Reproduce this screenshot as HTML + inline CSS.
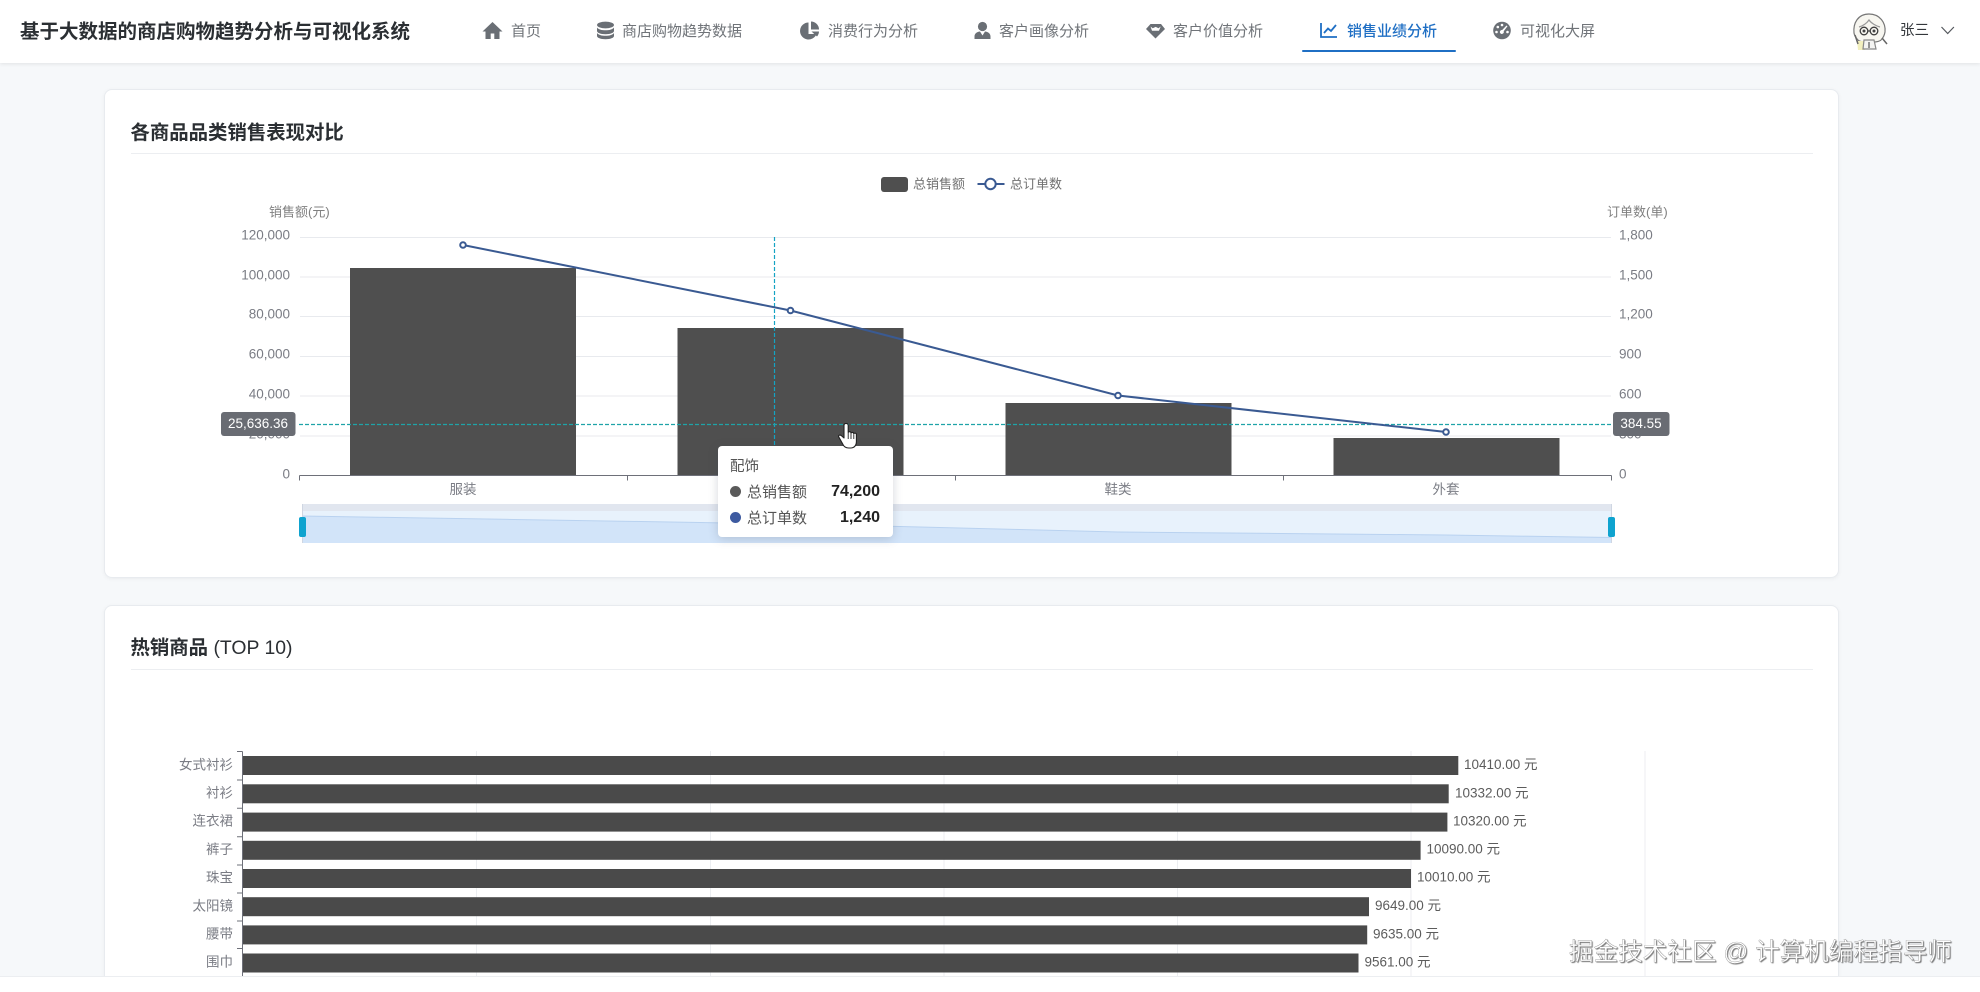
<!DOCTYPE html>
<html lang="zh-CN">
<head>
<meta charset="utf-8">
<title>基于大数据的商店购物趋势分析与可视化系统</title>
<style>
html,body{margin:0;padding:0;width:1980px;height:992px;overflow:hidden;background:#f6f8fa;font-family:"Liberation Sans","Noto Sans CJK SC",sans-serif}
#wrap{position:absolute;left:0;top:0;width:1980px;height:992px;overflow:hidden;filter:blur(.35px)}
#header{position:absolute;left:0;top:0;width:1980px;height:63px;background:#fff;box-shadow:0 1px 4px rgba(0,0,0,.09);z-index:3}
.brand{position:absolute;left:20px;top:18px;font-size:19.5px;line-height:28px;font-weight:700;color:#2b2f33;white-space:nowrap}
.nav{position:absolute;top:21px;font-size:15px;line-height:22px;color:#707479;white-space:nowrap}
.nav.on{color:#1f6fc4;font-weight:500}
.ico{position:absolute;top:0;left:0;width:1980px;height:63px;pointer-events:none}
.under{position:absolute;left:1302px;top:50px;width:154px;height:2px;background:#1f6fc4;border-radius:1px}
.name{position:absolute;left:1900px;top:20px;font-size:14.5px;line-height:22px;color:#33373b}
.card{position:absolute;left:104px;width:1735px;background:#fff;border:1px solid #e8ebef;border-radius:8px;box-sizing:border-box;box-shadow:0 1px 4px rgba(0,0,0,.05)}
#c1{top:89px;height:489px}
#c2{top:605px;height:385px}
.ct{position:absolute;left:130.500px;font-size:19.4px;line-height:28px;font-weight:700;color:#2b2f33;white-space:nowrap;z-index:1}
.ct span{font-weight:400}
.dv{position:absolute;left:131px;width:1682px;height:1px;background:#eceef1;z-index:1}
#chart{position:absolute;left:0;top:0;width:1980px;height:992px;z-index:1}
#chart text{font-family:"Liberation Sans","Noto Sans CJK SC",sans-serif}
#tip{position:absolute;left:718px;top:446px;width:175px;height:91px;background:#fff;border-radius:4px;box-shadow:0 2px 10px rgba(60,70,90,.22);z-index:2;color:#555}
#tip div{position:absolute;white-space:nowrap}
.dot{width:11px;height:11px;border-radius:50%}
.val{right:13px;font-size:16px;font-weight:700;color:#222;line-height:22px}
.lab{left:29px;font-size:15px;line-height:22px;color:#555}
#cur{position:absolute;left:0;top:0;width:1980px;height:992px;z-index:4;pointer-events:none}
#foot{position:absolute;left:0;top:976px;width:1980px;height:16px;background:#fff;border-top:1px solid #eceef1;box-sizing:border-box;z-index:3}
#wm{position:absolute;left:1569px;top:937px;font-size:24.6px;line-height:32px;color:#fff;-webkit-text-stroke:.35px #8a8a8a;text-shadow:1px 1px 1px rgba(0,0,0,.55);white-space:nowrap;z-index:5}
</style>
</head>
<body>
<div id="wrap">
<div id="header">
  <div class="brand">基于大数据的商店购物趋势分析与可视化系统</div>
  <svg class="ico" viewBox="0 0 1980 63">
    <!-- home -->
    <path fill="#6a6f75" d="M492.500 22 482.500 31.500h3V39h5.200v-5.500h3.600V39h5.200v-7.500h3z"/>
    <!-- database -->
    <g fill="#6a6f75">
      <ellipse cx="605.500" cy="25" rx="8.500" ry="3.400"/>
      <path d="M597 27.500c1.500 2 4.800 2.800 8.500 2.800s7-.8 8.500-2.800V31c0 1.900-3.800 3.200-8.500 3.200S597 32.900 597 31z"/>
      <path d="M597 33c1.500 2 4.800 2.800 8.500 2.800s7-.8 8.500-2.800v3c0 1.900-3.800 3.200-8.500 3.200S597 37.900 597 36z"/>
    </g>
    <!-- pie -->
    <g fill="#6a6f75">
      <path d="M808.500 22.500a8.500 8.500 0 1 0 8 11.500h-8z"/>
      <path d="M811 21.500a8 8 0 0 1 8 8h-8z"/>
      <path d="M811.500 31.500h7.500a8 8 0 0 1-2 5z"/>
    </g>
    <!-- user -->
    <g fill="#6a6f75">
      <circle cx="982.500" cy="26.500" r="4.600"/>
      <path d="M974.500 39v-2.500c0-3 2.500-4.800 5.500-5l2.500 4 2.500-4c3 .2 5.500 2 5.500 5V39z"/>
    </g>
    <!-- gem -->
    <path fill="#6a6f75" d="M1150.500 24h10.500l4 5-9.500 9.500-9.500-9.500z"/>
    <path fill="#fff" d="M1150.500 26.500l2.200 1.700 3-1.300 2.800 1.300 2.200-1.700-1.700 4.200h-7z"/>
    <!-- chart line -->
    <g fill="none" stroke="#1f6fc4" stroke-width="1.800">
      <path d="M1321 23v14h16"/>
      <path d="M1324 33l4-4.500 3 2.500 5-6"/>
    </g>
    <!-- dial -->
    <circle cx="1502" cy="30.500" r="8.800" fill="#6a6f75"/>
    <g fill="#fff">
      <circle cx="1496.500" cy="32" r="1.300"/>
      <circle cx="1497.800" cy="27" r="1.300"/>
      <circle cx="1502" cy="25" r="1.300"/>
      <circle cx="1507.500" cy="32" r="1.300"/>
      <path d="M1506.500 25.500l1 .7-3.800 5a2 2 0 1 1-1.500-1.200z"/>
    </g>
    <!-- avatar -->
    <g fill="none" stroke="#777" stroke-width="1.200">
      <path fill="#f7f6f0" d="M1854 33c-1-10 4-19 15-19s17 9 16 18c-.5 3-2 6-4 8-3 3-20 3-23 0-2-2-3.500-4-4-7z"/>
      <path fill="#f2efbe" stroke="none" d="M1857 41h10l-2 9h-7z"/>
      <path fill="#f4f4f2" stroke="#888" d="M1864 40h10l2 9h-13z"/>
      <path d="M1859 27c4-1 8-4 10-7 2 3 7 6 11 7" stroke="#999"/>
      <circle cx="1864" cy="31" r="3.800" stroke="#3c3c3c" stroke-width="1.300"/>
      <circle cx="1874" cy="31" r="3.800" stroke="#3c3c3c" stroke-width="1.300"/>
      <path d="M1867.800 31h2.400" stroke="#3c3c3c"/>
      <path d="M1855 35l3 9M1882 38l5 6" stroke="#666" stroke-width="1.500"/>
      <path d="M1869 42v6" stroke="#555"/>
    </g>
    <circle cx="1864" cy="31" r="1.500" fill="#444"/>
    <circle cx="1874" cy="31" r="1.500" fill="#444"/>
    <!-- chevron -->
    <path d="M1941.500 27l6.200 6.500 6.200-6.500" fill="none" stroke="#55595e" stroke-width="1.200"/>
  </svg>
  <div class="nav" style="left:511px">首页</div>
  <div class="nav" style="left:622px">商店购物趋势数据</div>
  <div class="nav" style="left:828px">消费行为分析</div>
  <div class="nav" style="left:999px">客户画像分析</div>
  <div class="nav" style="left:1173px">客户价值分析</div>
  <div class="nav on" style="left:1347px">销售业绩分析</div>
  <div class="nav" style="left:1520px">可视化大屏</div>
  <div class="under"></div>
  <div class="name">张三</div>
</div>

<div class="card" id="c1"></div>
<div class="card" id="c2"></div>
<div class="ct" style="top:118.500px">各商品品类销售表现对比</div>
<div class="dv" style="top:153px"></div>
<div class="ct" style="top:634px">热销商品 <span>(TOP 10)</span></div>
<div class="dv" style="top:669px"></div>

<svg id="chart" viewBox="0 0 1980 992">
  <!-- legend -->
  <rect x="881" y="177" width="27" height="15" rx="3" fill="#4f4f4f"/>
  <text x="913" y="184" font-size="13" fill="#707070" dominant-baseline="central">总销售额</text>
  <path d="M977.500 184h27" stroke="#3a5a92" stroke-width="2"/>
  <circle cx="990.500" cy="184" r="5.200" fill="#fff" stroke="#3a5a92" stroke-width="2"/>
  <text x="1010" y="184" font-size="13" fill="#707070" dominant-baseline="central">总订单数</text>

  <!-- axis names -->
  <text x="269" y="212" font-size="13" fill="#808080" dominant-baseline="central">销售额(元)</text>
  <text x="1607" y="212" font-size="13" fill="#808080" dominant-baseline="central">订单数(单)</text>

  <!-- grid -->
  <g stroke="#e8eaee" stroke-width="1">
    <path d="M300 237.500H1611M300 277H1611M300 316.500H1611M300 356.500H1611M300 396H1611M300 436H1611"/>
  </g>

  <!-- y labels -->
  <g font-size="13.500" fill="#7a7c84" text-anchor="end" dominant-baseline="central">
    <text x="290" y="235">120,000</text>
    <text x="290" y="275">100,000</text>
    <text x="290" y="314">80,000</text>
    <text x="290" y="354">60,000</text>
    <text x="290" y="394">40,000</text>
    <text x="290" y="434">20,000</text>
    <text x="290" y="474">0</text>
  </g>
  <g font-size="13.500" fill="#7a7c84" dominant-baseline="central">
    <text x="1619" y="235">1,800</text>
    <text x="1619" y="275">1,500</text>
    <text x="1619" y="314">1,200</text>
    <text x="1619" y="354">900</text>
    <text x="1619" y="394">600</text>
    <text x="1619" y="434">300</text>
    <text x="1619" y="474">0</text>
  </g>

  <!-- bars -->
  <g fill="#4f4f4f">
    <rect x="350" y="268" width="226" height="207.500"/>
    <rect x="677.500" y="328" width="226" height="147.500"/>
    <rect x="1005.500" y="403" width="226" height="72.500"/>
    <rect x="1333.500" y="438" width="226" height="37.500"/>
  </g>

  <!-- x axis -->
  <path d="M299.500 475.500H1611.500M299.500 475.500v5M627.500 475.500v5M955.500 475.500v5M1283.500 475.500v5M1611.500 475.500v5" stroke="#6e7079" fill="none"/>
  <g font-size="13.500" fill="#7a7c84" text-anchor="middle" dominant-baseline="central">
    <text x="463" y="489.500">服装</text>
    <text x="791" y="489.500">配饰</text>
    <text x="1118" y="489.500">鞋类</text>
    <text x="1446" y="489.500">外套</text>
  </g>

  <!-- crosshair -->
  <path d="M774.500 237V475" stroke="#14a3c4" stroke-width="1.200" stroke-dasharray="4 2" fill="none"/>
  <path d="M299 424.500H1612" stroke="#1fa3a8" stroke-width="1.200" stroke-dasharray="4 2" fill="none"/>

  <!-- line -->
  <polyline points="463,245 790.500,310.500 1118,395.500 1446,432" fill="none" stroke="#3a5a92" stroke-width="2"/>
  <g fill="#fff" stroke="#3a5a92" stroke-width="2">
    <circle cx="463" cy="245" r="2.800"/>
    <circle cx="790.500" cy="310.500" r="2.800"/>
    <circle cx="1118" cy="395.500" r="2.800"/>
    <circle cx="1446" cy="432" r="2.800"/>
  </g>

  <!-- axis pointer labels -->
  <rect x="221" y="412" width="74.500" height="24" rx="3" fill="#696c73"/>
  <text x="258" y="423.500" font-size="13.500" fill="#fff" text-anchor="middle" dominant-baseline="central">25,636.36</text>
  <rect x="1613" y="412" width="56.500" height="24" rx="3" fill="#696c73"/>
  <text x="1641" y="423.500" font-size="13.500" fill="#fff" text-anchor="middle" dominant-baseline="central">384.55</text>

  <!-- data zoom -->
  <rect x="302" y="504" width="1310" height="7" fill="#e1e6ef"/>
  <rect x="302" y="511" width="1310" height="32" fill="#e8f2fc"/>
  <polygon points="302,516 700,522.500 900,526.500 1118,532 1446,535 1611,537.500 1611,543 302,543" fill="#d2e4f9"/>
  <polyline points="302,516 700,522.500 900,526.500 1118,532 1446,535 1611,537.500" fill="none" stroke="#b9d2f0" stroke-width="1"/>
  <path d="M302.500 504V543M1611.500 504V543" stroke="#cfd6e2" stroke-width="1"/>
  <rect x="299" y="517" width="7" height="20" rx="2" fill="#0fa3cf"/>
  <rect x="1608" y="517" width="7" height="20" rx="2" fill="#0fa3cf"/>

  <!-- chart 2 grid -->
  <path d="M476.500 751V976M710.500 751V976M944 751V976M1177.500 751V976M1411 751V976M1645 751V976" stroke="#eceef1" stroke-width="1" fill="none"/>
  <!-- chart 2 bars -->
  <g fill="#4a4a4a">
    <rect x="242" y="756" width="1216.300" height="19"/>
    <rect x="242" y="784.300" width="1206.700" height="19"/>
    <rect x="242" y="812.600" width="1205.400" height="19"/>
    <rect x="242" y="840.800" width="1178.600" height="19"/>
    <rect x="242" y="869" width="1169" height="19"/>
    <rect x="242" y="897.200" width="1127" height="19"/>
    <rect x="242" y="925.400" width="1125.200" height="19"/>
    <rect x="242" y="953.500" width="1116.500" height="19"/>
  </g>
  <!-- chart 2 axis -->
  <path d="M242.500 751.500V976M237 751.500h5.500M237 780h5.500M237 808.300h5.500M237 836.700h5.500M237 865h5.500M237 893h5.500M237 921h5.500M237 948.500h5.500" stroke="#6e7079" stroke-width="1" fill="none"/>
  <g font-size="13.500" fill="#7a7c84" text-anchor="end" dominant-baseline="central">
    <text x="233" y="765">女式衬衫</text>
    <text x="233" y="793">衬衫</text>
    <text x="233" y="821">连衣裙</text>
    <text x="233" y="849.500">裤子</text>
    <text x="233" y="877.500">珠宝</text>
    <text x="233" y="906">太阳镜</text>
    <text x="233" y="934">腰带</text>
    <text x="233" y="962">围巾</text>
  </g>
  <g font-size="13.500" fill="#5c5c5c" dominant-baseline="central">
    <text x="1464" y="764.500">10410.00 元</text>
    <text x="1455" y="793">10332.00 元</text>
    <text x="1453" y="821">10320.00 元</text>
    <text x="1426.500" y="849">10090.00 元</text>
    <text x="1417" y="877">10010.00 元</text>
    <text x="1375" y="905.500">9649.00 元</text>
    <text x="1373" y="934">9635.00 元</text>
    <text x="1364.500" y="962">9561.00 元</text>
  </g>
</svg>

<div id="tip">
  <div style="left:12px;top:10px;font-size:14.500px;line-height:22px;color:#555">配饰</div>
  <div class="dot" style="left:12px;top:40px;background:#5a5a5a"></div>
  <div class="lab" style="top:36px">总销售额</div>
  <div class="val" style="top:35px">74,200</div>
  <div class="dot" style="left:12px;top:66px;background:#3d5aa0"></div>
  <div class="lab" style="top:62px">总订单数</div>
  <div class="val" style="top:61px">1,240</div>
</div>

<svg id="cur" viewBox="0 0 1980 992">
  <path fill="#fff" stroke="#222" stroke-width="1.100" stroke-linejoin="round" d="M846 423.500c-1.200 0-2 .8-2 2V438l-2.800-2.500c-1.400-1-3-.2-2.600 1.200l4.200 7.500c1 2.400 3 3.800 6 3.800h2c3.400 0 5.600-2.600 5.600-6v-7.500c0-1.600-2-1.800-2.600-.6 0-1.600-2-2-2.800-.8 0-1.600-2-2-2.800-.6V425.500c0-1.200-.8-2-2.200-2z"/>
  <path d="M848.200 433v6M851 433.500v5.500M853.800 434.500v4.500" stroke="#222" stroke-width=".9" fill="none"/>
</svg>

<div id="foot"></div>
<div id="wm">掘金技术社区 @ 计算机编程指导师</div>
</div>
</body>
</html>
